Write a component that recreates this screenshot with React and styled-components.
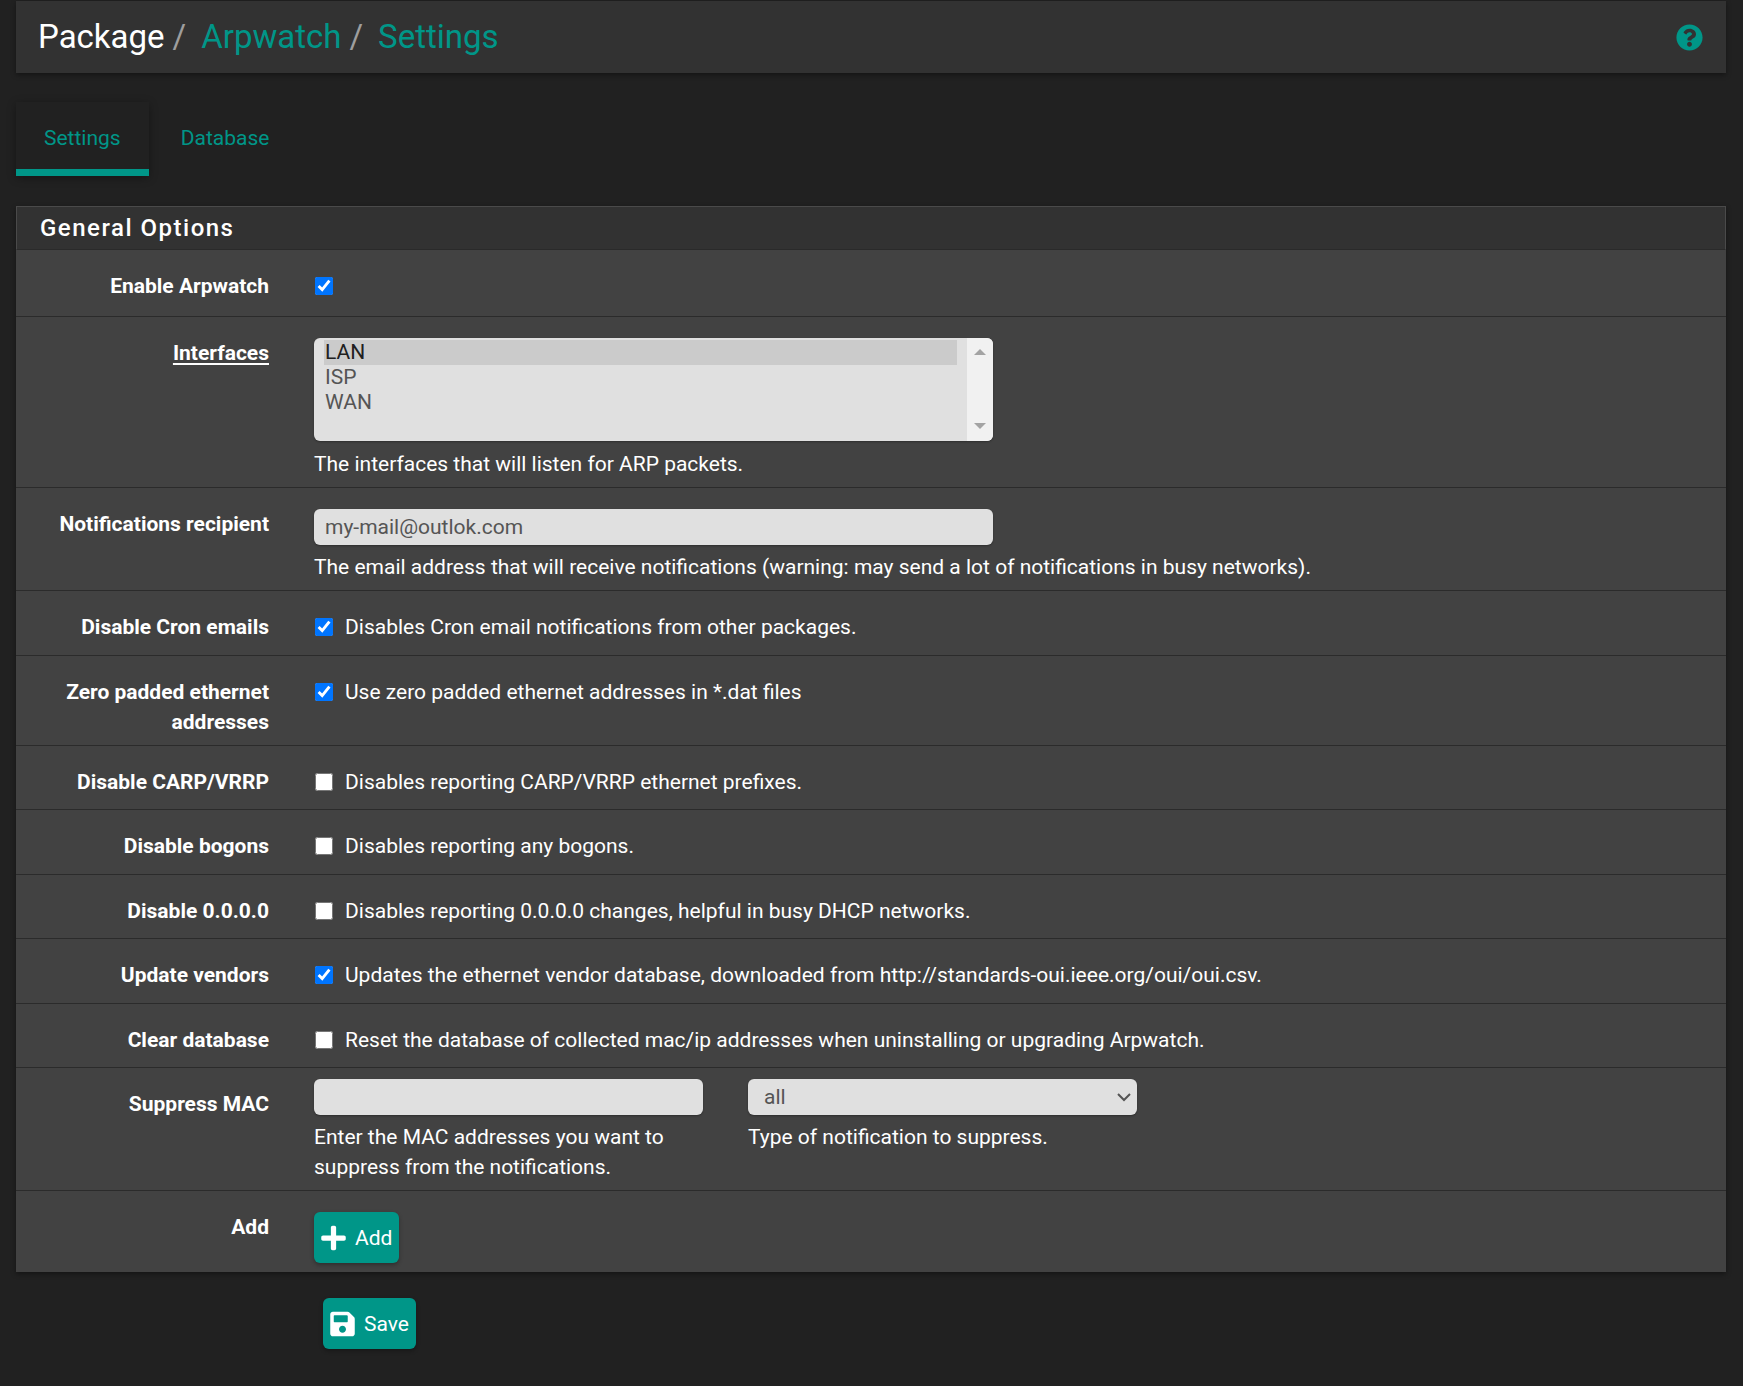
import React from "react";
import styled, { createGlobalStyle } from "styled-components";
import { FaPlus, FaSave, FaQuestionCircle } from "react-icons/fa";

const GlobalStyle = createGlobalStyle`
  html, body {
    margin: 0;
    padding: 0;
    background: #212121;
    color: #fff;
    font-family: Roboto, "Liberation Sans", sans-serif;
    font-size: 21px;
  }
`;

const Page = styled.div`
  width: 1743px;
  height: 1386px;
  box-sizing: border-box;
  padding: 1px 17px 0 16px;
  overflow: hidden;
`;

const Header = styled.div`
  display: flex;
  align-items: center;
  justify-content: space-between;
  height: 72px;
  padding: 0 23px 0 22px;
  background: #323232;
  box-shadow: 0 2px 5px rgba(0, 0, 0, 0.4);
`;

const Crumbs = styled.div`
  display: flex;
  align-items: baseline;
  font-size: 33px;
  line-height: 72px;
`;

const Crumb = styled.span`
  color: ${(props) => (props.$link ? "#009688" : "#fff")};
`;

const Slash = styled.span`
  color: #9e9e9e;
  margin: 0 15px 0 8px;
`;

const HelpIcon = styled(FaQuestionCircle)`
  width: 27px;
  height: 27px;
  margin-top: 1px;
  color: #009688;
`;

const Tabs = styled.div`
  display: flex;
  gap: 4px;
  margin-top: 29px;
`;

const Tab = styled.div`
  box-sizing: border-box;
  height: 74px;
  padding: 0 28px;
  line-height: 72px;
  font-size: 21px;
  color: #009688;
  ${(props) =>
    props.$active &&
    `
    border-bottom: 7px solid #009688;
    box-shadow: 0 2px 8px rgba(0, 0, 0, 0.35);
  `}
`;

const Panel = styled.div`
  margin-top: 30px;
  background: #424242;
  box-shadow: 0 2px 5px rgba(0, 0, 0, 0.4);
`;

const PanelTitle = styled.div`
  box-sizing: border-box;
  height: 44px;
  padding-left: 23px;
  line-height: 42px;
  background: #323232;
  border: 1px solid #4a4a4a;
  border-bottom: 1px solid #2a2a2a;
  font-size: 24px;
  font-weight: 500;
  letter-spacing: 1.5px;
`;

const Row = styled.div`
  display: flex;
  box-sizing: border-box;
  height: ${(props) => props.$h}px;
  padding-top: ${(props) => props.$top || 22}px;
  border-bottom: ${(props) => (props.$last ? "none" : "1px solid #2b2b2b")};
`;

const Label = styled.div`
  flex: 0 0 253px;
  margin-right: 45px;
  padding-top: ${(props) => props.$top || 0}px;
  text-align: right;
  font-size: 21px;
  font-weight: 700;
  line-height: 30px;
`;

const LabelLink = styled.span`
  text-decoration: underline;
  text-underline-offset: 3px;
`;

const Field = styled.div`
  display: flex;
  flex-direction: column;
`;

const Inline = styled.div`
  display: flex;
  align-items: center;
  gap: 12px;
  height: 30px;
  padding-left: 1px;
  font-size: 21px;
`;

const Check = styled.input.attrs({ type: "checkbox", readOnly: true })`
  width: 18px;
  height: 18px;
  margin: 0;
  accent-color: #0075ff;
`;

const ListBox = styled.div`
  display: flex;
  box-sizing: border-box;
  width: 679px;
  height: 103px;
  padding-left: 10px;
  background: #e0e0e0;
  border-radius: 6px;
  overflow: hidden;
  box-shadow: 0 1px 2px rgba(0, 0, 0, 0.3);
`;

const Options = styled.div`
  flex: 1;
  margin-right: 10px;
  padding-top: 2px;
`;

const Option = styled.div`
  height: 25px;
  line-height: 25px;
  padding-left: 1px;
  font-size: 21px;
  color: ${(props) => (props.$selected ? "#212121" : "#555")};
  background: ${(props) => (props.$selected ? "#cbcbcb" : "transparent")};
`;

const ScrollBar = styled.div`
  display: flex;
  flex-direction: column;
  justify-content: space-between;
  align-items: center;
  width: 26px;
  padding: 11px 0 12px;
  background: #f1f1f1;
`;

const Arrow = styled.div`
  width: 0;
  height: 0;
  border-left: 6px solid transparent;
  border-right: 6px solid transparent;
  ${(props) => (props.$down ? "border-top" : "border-bottom")}: 6px solid #a3a3a3;
`;

const TextBox = styled.input.attrs({ type: "text", readOnly: true })`
  box-sizing: border-box;
  width: ${(props) => props.$w}px;
  height: 36px;
  padding: 0 11px;
  border: none;
  border-radius: 6px;
  outline: none;
  background: #e0e0e0;
  color: #555;
  font-family: inherit;
  font-size: 21px;
  box-shadow: 0 1px 2px rgba(0, 0, 0, 0.3);
`;

const Dropdown = styled.select`
  appearance: none;
  box-sizing: border-box;
  width: 389px;
  height: 36px;
  padding: 0 16px;
  border: none;
  border-radius: 6px;
  outline: none;
  background-color: #e0e0e0;
  background-image: url("data:image/svg+xml,%3Csvg xmlns='http://www.w3.org/2000/svg' width='14' height='10'%3E%3Cpath d='M1 2l6 6 6-6' fill='none' stroke='%23555' stroke-width='2'/%3E%3C/svg%3E");
  background-repeat: no-repeat;
  background-position: right 6px center;
  color: #555;
  font-family: inherit;
  font-size: 21px;
  box-shadow: 0 1px 2px rgba(0, 0, 0, 0.3);
`;

const Help = styled.div`
  margin-top: ${(props) => props.$mt || 7}px;
  font-size: 21px;
  line-height: 30px;
  width: ${(props) => (props.$w ? `${props.$w}px` : "auto")};
`;

const Columns = styled.div`
  display: flex;
  gap: 45px;
`;

const Button = styled.div`
  display: inline-flex;
  align-items: center;
  align-self: flex-start;
  box-sizing: border-box;
  height: 51px;
  gap: 9px;
  padding: 0 7px;
  background: #009688;
  border-radius: 6px;
  color: #fff;
  font-size: 21px;
  box-shadow: 0 2px 4px rgba(0, 0, 0, 0.3);
`;

const PlusIcon = styled(FaPlus)`
  width: 25px;
  height: 28px;
`;

const SaveIcon = styled(FaSave)`
  width: 25px;
  height: 28px;
`;

const Footer = styled.div`
  margin-top: 26px;
  padding-left: 307px;
`;

const rows = [
  { label: "Disable CARP/VRRP", text: "Disables reporting CARP/VRRP ethernet prefixes.", h: 64 },
  { label: "Disable bogons", text: "Disables reporting any bogons.", h: 65 },
  { label: "Disable 0.0.0.0", text: "Disables reporting 0.0.0.0 changes, helpful in busy DHCP networks.", h: 64 },
  {
    label: "Update vendors",
    text: "Updates the ethernet vendor database, downloaded from http://standards-oui.ieee.org/oui/oui.csv.",
    h: 65,
    checked: true,
  },
  {
    label: "Clear database",
    text: "Reset the database of collected mac/ip addresses when uninstalling or upgrading Arpwatch.",
    h: 64,
  },
];

const CheckRow = ({ label, text, h, checked }) => (
  <Row $h={h} $top={21}>
    <Label>{label}</Label>
    <Inline>
      <Check checked={!!checked} />
      {text}
    </Inline>
  </Row>
);

export default function App() {
  return (
    <Page>
      <GlobalStyle />
      <Header>
        <Crumbs>
          <Crumb>Package</Crumb>
          <Slash>/</Slash>
          <Crumb $link>Arpwatch</Crumb>
          <Slash>/</Slash>
          <Crumb $link>Settings</Crumb>
        </Crumbs>
        <HelpIcon />
      </Header>

      <Tabs>
        <Tab $active>Settings</Tab>
        <Tab>Database</Tab>
      </Tabs>

      <Panel>
        <PanelTitle>General Options</PanelTitle>
        <Row $h={67} $top={21}>
          <Label>Enable Arpwatch</Label>
          <Inline>
            <Check checked />
          </Inline>
        </Row>
        <Row $h={171} $top={21}>
          <Label>
            <LabelLink>Interfaces</LabelLink>
          </Label>
          <Field>
            <ListBox>
              <Options>
                <Option $selected>LAN</Option>
                <Option>ISP</Option>
                <Option>WAN</Option>
              </Options>
              <ScrollBar>
                <Arrow />
                <Arrow $down />
              </ScrollBar>
            </ListBox>
            <Help $mt={8}>The interfaces that will listen for ARP packets.</Help>
          </Field>
        </Row>
        <Row $h={103} $top={21}>
          <Label>Notifications recipient</Label>
          <Field>
            <TextBox $w={679} value="my-mail@outlok.com" />
            <Help>
              The email address that will receive notifications (warning: may send a lot of notifications in busy
              networks).
            </Help>
          </Field>
        </Row>
        <CheckRow
          label="Disable Cron emails"
          text="Disables Cron email notifications from other packages."
          h={65}
          checked
        />
        <Row $h={90} $top={21}>
          <Label>Zero padded ethernet addresses</Label>
          <Inline>
            <Check checked />
            Use zero padded ethernet addresses in *.dat files
          </Inline>
        </Row>
        {rows.map((row) => (
          <CheckRow key={row.label} {...row} />
        ))}
        <Row $h={123} $top={11}>
          <Label $top={10}>Suppress MAC</Label>
          <Columns>
            <Field>
              <TextBox $w={389} value="" />
              <Help $w={389}>Enter the MAC addresses you want to suppress from the notifications.</Help>
            </Field>
            <Field>
              <Dropdown defaultValue="all">
                <option value="all">all</option>
              </Dropdown>
              <Help>Type of notification to suppress.</Help>
            </Field>
          </Columns>
        </Row>
        <Row $h={81} $top={21} $last>
          <Label>Add</Label>
          <Button>
            <PlusIcon />
            Add
          </Button>
        </Row>
      </Panel>

      <Footer>
        <Button>
          <SaveIcon />
          Save
        </Button>
      </Footer>
    </Page>
  );
}
